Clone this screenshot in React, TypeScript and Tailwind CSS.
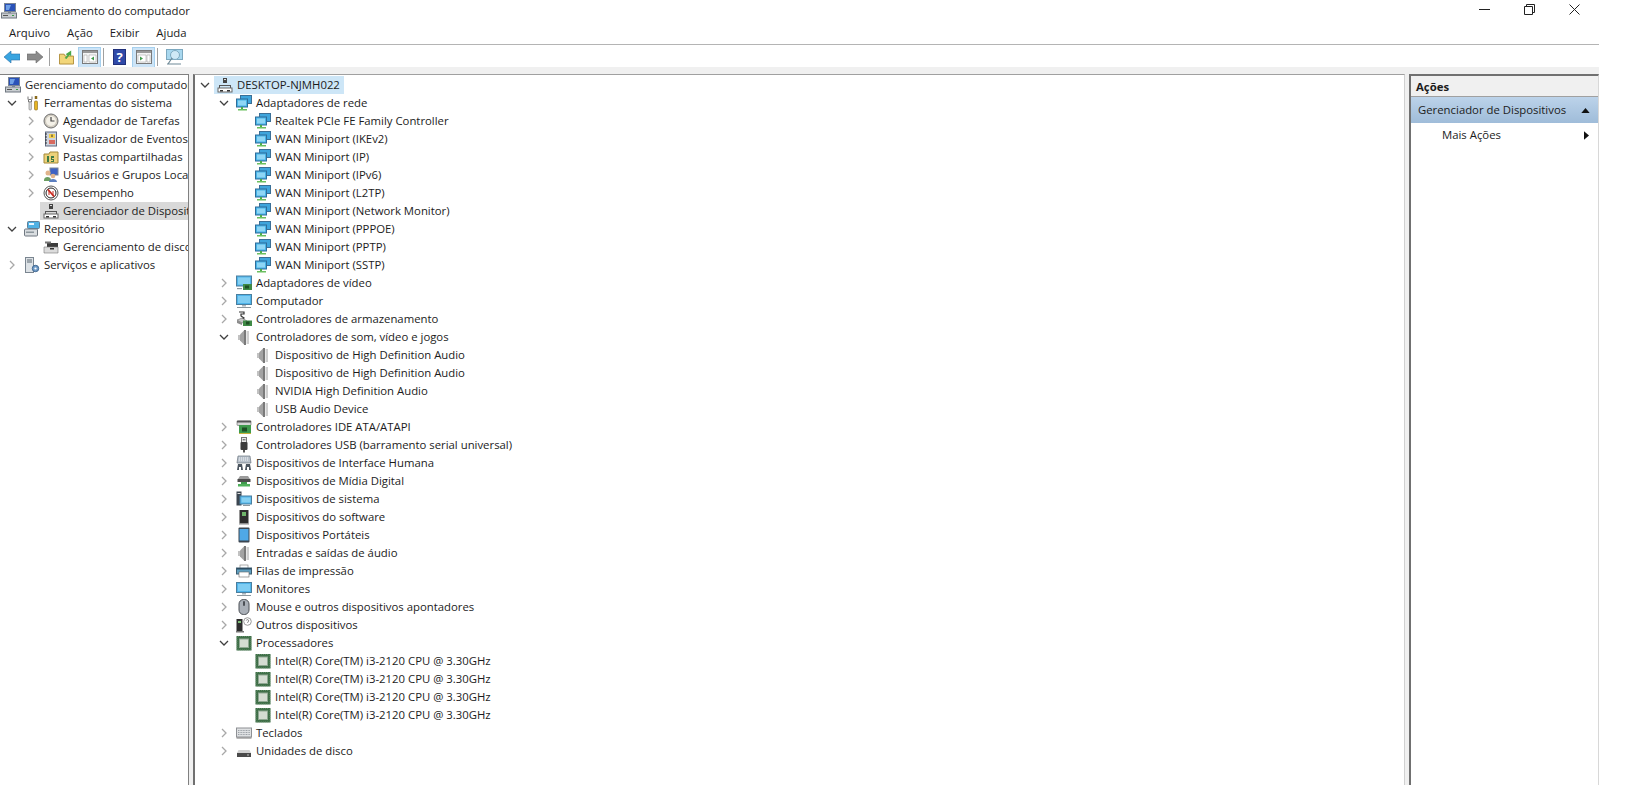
import React from 'react';

const Svg = ({ children, className = 'w-4 h-4' }: { children: React.ReactNode; className?: string }) => (
  <svg viewBox="0 0 16 16" className={`${className} shrink-0`}>
    {children}
  </svg>
);

const Net = () => (
  <Svg>
    <rect x="4.5" y="0.5" width="11" height="8" fill="#3fa5dc" stroke="#3b6f96" />
    <rect x="0.5" y="4" width="11" height="8" fill="#47b4e8" stroke="#2f6d99" />
    <rect x="2" y="5.5" width="8" height="5" fill="#8fd6f5" />
    <rect x="5" y="12" width="2" height="2" fill="#4fae4a" />
    <rect x="2" y="14" width="9" height="1.5" fill="#6bbf5f" />
  </Svg>
);
const Speaker = () => (
  <Svg>
    <path d="M2 6h3v5H2z" fill="#c2c2c2" />
    <path d="M4 5.5 8 1.500v14l-4-4z" fill="#a3a3a3" />
    <path d="M8 1h2v15H8z" fill="#7a7a7a" />
    <path d="M10.500 2h2.500v13h-2.500z" fill="#cfcfcf" />
  </Svg>
);
const Chip = () => (
  <Svg>
    <rect x="0.5" y="1" width="15" height="14.500" fill="#3f6f48" />
    <rect x="3.500" y="4" width="9" height="8.500" fill="#d4dcd2" stroke="#8fa892" />
    <path d="M1 2v13M15 2v13M2 1.500h12M2 15h12" stroke="#77a07c" strokeWidth="0.6" strokeDasharray="1 1" />
  </Svg>
);
const Screen = () => (
  <Svg>
    <rect x="0.5" y="1.5" width="15" height="10" fill="#4fb4ea" stroke="#4a7f9f" />
    <rect x="2" y="3" width="12" height="7" fill="#7fcdf3" />
    <rect x="6" y="12" width="4" height="1.5" fill="#aab4bb" />
    <rect x="1" y="14" width="14" height="1" fill="#8d979d" />
  </Svg>
);
const DeviceMgr = () => (
  <Svg>
    <rect x="6" y="1" width="4" height="5" fill="#444" />
    <rect x="7" y="2" width="2" height="1" fill="#ddd" />
    <path d="M2 8h12v7h-1V9H3v6H2z" fill="#555" />
    <rect x="1" y="11" width="14" height="4" fill="#fff" stroke="#666" />
    <rect x="3" y="13" width="3" height="1.5" fill="#333" />
    <rect x="10" y="13" width="3" height="1.5" fill="#333" />
  </Svg>
);
const CompMgmt = () => (
  <Svg>
    <rect x="3.5" y="0.5" width="11" height="8" fill="#2a52b8" stroke="#7a8596" />
    <path d="M5 2h5l-2 5H5z" fill="#6fa0e6" />
    <rect x="0.5" y="10" width="15" height="5" fill="#c8ccd0" stroke="#6f7780" />
    <rect x="7" y="9" width="3" height="1" fill="#7a8596" />
    <rect x="2" y="12" width="5" height="1" fill="#555" />
    <rect x="11" y="12" width="2" height="1" fill="#3a9a48" />
  </Svg>
);
const Tools = () => (
  <Svg>
    <path d="M4 1.5v3M8 1.5v3M4.5 4.5h3V7h-3z" stroke="#777" fill="none" />
    <rect x="5" y="7" width="2.4" height="8" rx="1" fill="#d9dadb" stroke="#777" strokeWidth="0.6" />
    <path d="M12 1v3" stroke="#8a6a1c" strokeWidth="2.5" />
    <rect x="10.5" y="6" width="3" height="9" rx="1" fill="#e6b422" stroke="#8a6a1c" strokeWidth="0.6" />
  </Svg>
);
const Clock = () => (
  <Svg>
    <circle cx="8" cy="8" r="7" fill="#cfcabf" stroke="#6f6f6f" />
    <circle cx="8" cy="8" r="5" fill="#f4f1e8" />
    <path d="M8 4v4h3.5" stroke="#444" fill="none" strokeWidth="1.2" />
  </Svg>
);
const EventLog = () => (
  <Svg>
    <rect x="2.5" y="1" width="11" height="14" fill="#cdd3dd" stroke="#5f6a80" />
    <path d="M2 3h2M2 6h2M2 9h2M2 12h2" stroke="#333" />
    <path d="M6 3h6v4H6z" fill="#f2cf4f" />
    <path d="M6 9h6v4H6z" fill="#d86a60" />
    <path d="M9 3.5v2.5" stroke="#333" />
  </Svg>
);
const SharedFolder = () => (
  <Svg>
    <path d="M1 5h5l1-2h8v11H1z" fill="#ecd27a" stroke="#a58a3a" />
    <path d="M4 7h2v6H4zM8 7h3v2H9v1h2v3H8v-1h2v-1H8z" fill="#3d7b46" />
  </Svg>
);
const Users = () => (
  <Svg>
    <rect x="7" y="1" width="8" height="7" fill="#3d62c4" stroke="#7a8596" />
    <circle cx="5" cy="6" r="2.5" fill="#e0b48c" />
    <path d="M1 13c0-4 7-4 7 0v1H1z" fill="#6b9e62" />
    <circle cx="10" cy="9" r="2.3" fill="#e0b48c" />
    <path d="M6 15c0-4 8-4 8 0z" fill="#5c7fc0" />
  </Svg>
);
const Perf = () => (
  <Svg>
    <circle cx="8" cy="8" r="7" fill="#fff" stroke="#555" />
    <circle cx="8" cy="8" r="5" fill="none" stroke="#222" strokeWidth="1" />
    <path d="M5 4.5 11 11.5" stroke="#c8281e" strokeWidth="1.8" />
    <path d="M6 10V6l4 4V6" stroke="#c8281e" fill="none" strokeWidth="1" />
  </Svg>
);
const Repo = () => (
  <Svg>
    <rect x="3.5" y="0.5" width="12" height="7" rx="1" fill="#4fb1e4" stroke="#5f7f96" />
    <rect x="5" y="2" width="5" height="2" fill="#e8f5ff" />
    <rect x="0.5" y="8" width="13" height="7" rx="1" fill="#d9dde0" stroke="#6f7780" />
    <rect x="2" y="10.5" width="8" height="1.5" fill="#8d979d" />
  </Svg>
);
const DiskMgmt = () => (
  <Svg>
    <path d="M4 4h11v4H4z" fill="#3c3c3c" />
    <path d="M1 8h14v6H1z" fill="#dcdcdc" stroke="#777" strokeWidth="0.6" />
    <rect x="7" y="9" width="4" height="1.5" fill="#333" />
    <rect x="2" y="2.5" width="6" height="2" fill="#777" />
  </Svg>
);
const Services = () => (
  <Svg>
    <rect x="1.5" y="0.5" width="8" height="15" fill="#dde2e6" stroke="#7a8590" />
    <path d="M3 3h5M3 5h5" stroke="#5b6670" />
    <circle cx="11.5" cy="11.5" r="3.2" fill="#6f9bc8" stroke="#3f6690" />
    <circle cx="11.5" cy="11.5" r="1.1" fill="#fff" />
  </Svg>
);
const VideoCard = () => (
  <Svg>
    <rect x="0.5" y="1" width="15" height="10" fill="#4fb4ea" stroke="#4a7f9f" />
    <rect x="2" y="2.5" width="12" height="7" fill="#86d0f2" />
    <rect x="7" y="9" width="9" height="6" fill="#3f8a46" />
    <rect x="9" y="10.5" width="4" height="3" fill="#1e4f24" />
    <rect x="1" y="13" width="5" height="1.2" fill="#8d979d" />
  </Svg>
);
const Storage = () => (
  <Svg>
    <path d="M3 1h5v2H5v2l3 2-3 2" stroke="#333" fill="none" strokeWidth="1.2" />
    <path d="M1 9l5-2 5 3-5 2z" fill="#c6c6c6" stroke="#555" strokeWidth="0.5" />
    <rect x="7" y="9.5" width="9" height="5.5" fill="#3f8a46" />
    <rect x="10" y="10.5" width="3.5" height="3" fill="#1e4f24" />
    <path d="M1 9v3l5 2v-2z" fill="#8c8c8c" />
  </Svg>
);
const Ide = () => (
  <Svg>
    <rect x="1" y="1.5" width="14" height="5" rx="1" fill="#d5d5d5" stroke="#666" strokeWidth="0.6" />
    <rect x="1" y="2" width="14" height="1.5" fill="#555" />
    <rect x="3" y="6" width="12" height="9" fill="#3f9a4c" />
    <rect x="6" y="8.5" width="5" height="4" fill="#1e4f24" />
    <rect x="3" y="14" width="12" height="1" fill="#c8b13c" />
  </Svg>
);
const Usb = () => (
  <Svg>
    <rect x="5.5" y="0.5" width="5" height="5" fill="#e8e8e8" stroke="#777" />
    <rect x="6.8" y="2" width="0.9" height="1.4" fill="#444" />
    <rect x="8.4" y="2" width="0.9" height="1.4" fill="#444" />
    <rect x="4.5" y="5" width="7" height="8" rx="1" fill="#3c3c3c" />
    <rect x="7" y="13" width="2" height="2.5" fill="#555" />
  </Svg>
);
const Hid = () => (
  <Svg>
    <path d="M2 1h12l1 7H1z" fill="#b9c2cc" stroke="#6c7680" strokeWidth="0.7" />
    <path d="M3 3h10M3 5h10" stroke="#f2f4f6" strokeDasharray="1 1" />
    <path d="M1 15l1-6h4l1 6H5V12H3v3zM9 15l1-6h4l1 6h-2v-3h-2v3z" fill="#4c5660" />
  </Svg>
);
const Media = () => (
  <Svg>
    <path d="M2 6l2-3h8l2 3z" fill="#9c9c9c" />
    <rect x="1.5" y="6" width="13" height="3" fill="#4c4c4c" />
    <rect x="5" y="9" width="6" height="2" fill="#3f9a4c" />
    <rect x="2" y="11" width="12" height="2.5" fill="#4fb05a" />
  </Svg>
);
const SystemIcon = () => (
  <Svg>
    <rect x="0.5" y="0.5" width="5" height="14" fill="#3c4650" />
    <rect x="1.5" y="2" width="3" height="1" fill="#ddd" />
    <rect x="4" y="5" width="11.5" height="8" fill="#4fb4ea" stroke="#4a7f9f" />
    <rect x="5.5" y="6.5" width="9" height="5" fill="#86d0f2" />
    <rect x="7" y="14" width="7" height="1" fill="#8d979d" />
  </Svg>
);
const Software = () => (
  <Svg>
    <rect x="3.5" y="1" width="9" height="13.5" fill="#2d2d2d" />
    <rect x="6" y="3" width="4" height="4" fill="#6fb56a" />
    <rect x="3" y="14.5" width="10" height="1" fill="#888" />
  </Svg>
);
const Portable = () => (
  <Svg>
    <rect x="2.5" y="0.5" width="11" height="15" rx="1" fill="#3c4650" />
    <rect x="3.5" y="2" width="9" height="11.5" fill="#4fa8e6" />
  </Svg>
);
const Printer = () => (
  <Svg>
    <rect x="4" y="2" width="8" height="4" fill="#fff" stroke="#777" strokeWidth="0.6" />
    <rect x="0.5" y="5" width="15" height="6" fill="#5e9fc0" stroke="#3c5c70" />
    <rect x="1" y="5" width="14" height="1.5" fill="#2e4c60" />
    <rect x="3" y="9" width="10" height="5" fill="#fff" stroke="#666" strokeWidth="0.6" />
  </Svg>
);
const Mouse = () => (
  <Svg>
    <rect x="3" y="0.5" width="10" height="15" rx="4.5" fill="#aab0b8" stroke="#4c5056" />
    <rect x="7" y="2" width="2" height="5" rx="1" fill="#4c5056" />
  </Svg>
);
const Other = () => (
  <Svg>
    <rect x="0.5" y="2" width="6" height="12" fill="#2d2d2d" />
    <rect x="2" y="4" width="3" height="2" fill="#7fbf78" />
    <rect x="0" y="14" width="8" height="1.5" fill="#777" />
    <circle cx="11.5" cy="4.5" r="3.8" fill="#fff" stroke="#9a9a9a" />
    <path d="M10.3 3.5a1.2 1.2 0 1 1 1.4 1.5v.8" stroke="#666" fill="none" strokeWidth="0.8" />
  </Svg>
);
const Keyboard = () => (
  <Svg>
    <rect x="0.5" y="3" width="15" height="9" fill="#dfe1e3" stroke="#8d9094" />
    <path d="M2 5.5h12M2 7.5h12M2 9.5h12" stroke="#9ba0a6" strokeDasharray="1 0.6" />
    <rect x="0.5" y="12.5" width="15" height="1" fill="#777" />
  </Svg>
);
const Disk = () => (
  <Svg>
    <path d="M2.5 7h11l1.500 3H1z" fill="#d2d2d2" />
    <rect x="1" y="10" width="14" height="4" fill="#4a4a4a" />
    <rect x="11" y="11.5" width="2" height="1" fill="#bfbfbf" />
  </Svg>
);

const Chevron = ({ open }: { open?: boolean }) => (
  <svg viewBox="0 0 10 10" className="w-[10px] h-[10px] shrink-0">
    {open ? (
      <path d="M1 3l4 4 4-4" fill="none" stroke="#404040" strokeWidth="1.3" />
    ) : (
      <path d="M3 1l4 4-4 4" fill="none" stroke="#a8a8a8" strokeWidth="1.3" />
    )}
  </svg>
);

interface RowProps {
  indent: string;
  icon: React.ReactNode;
  label: string;
  state?: 'open' | 'closed' | 'leaf' | 'none';
  rowClass?: string;
}

const TreeRow = ({ indent, icon, label, state = 'leaf', rowClass = '' }: RowProps) => (
  <div className={`flex items-center h-[18px] whitespace-nowrap ${indent} ${rowClass}`}>
    {state !== 'none' && (
      <span className="w-[17px] shrink-0 flex">
        {state !== 'leaf' && <Chevron open={state === 'open'} />}
      </span>
    )}
    {icon}
    <span className="ml-1">{label}</span>
  </div>
);

const d1 = 'pl-[24px]';
const d2 = 'pl-[43px]';

const rightRows: { label: string; icon: React.ReactNode; state: 'open' | 'closed' | 'leaf'; indent: string }[] = [
  { label: 'Adaptadores de rede', icon: <Net />, state: 'open', indent: d1 },
  { label: 'Realtek PCIe FE Family Controller', icon: <Net />, state: 'leaf', indent: d2 },
  { label: 'WAN Miniport (IKEv2)', icon: <Net />, state: 'leaf', indent: d2 },
  { label: 'WAN Miniport (IP)', icon: <Net />, state: 'leaf', indent: d2 },
  { label: 'WAN Miniport (IPv6)', icon: <Net />, state: 'leaf', indent: d2 },
  { label: 'WAN Miniport (L2TP)', icon: <Net />, state: 'leaf', indent: d2 },
  { label: 'WAN Miniport (Network Monitor)', icon: <Net />, state: 'leaf', indent: d2 },
  { label: 'WAN Miniport (PPPOE)', icon: <Net />, state: 'leaf', indent: d2 },
  { label: 'WAN Miniport (PPTP)', icon: <Net />, state: 'leaf', indent: d2 },
  { label: 'WAN Miniport (SSTP)', icon: <Net />, state: 'leaf', indent: d2 },
  { label: 'Adaptadores de vídeo', icon: <VideoCard />, state: 'closed', indent: d1 },
  { label: 'Computador', icon: <Screen />, state: 'closed', indent: d1 },
  { label: 'Controladores de armazenamento', icon: <Storage />, state: 'closed', indent: d1 },
  { label: 'Controladores de som, vídeo e jogos', icon: <Speaker />, state: 'open', indent: d1 },
  { label: 'Dispositivo de High Definition Audio', icon: <Speaker />, state: 'leaf', indent: d2 },
  { label: 'Dispositivo de High Definition Audio', icon: <Speaker />, state: 'leaf', indent: d2 },
  { label: 'NVIDIA High Definition Audio', icon: <Speaker />, state: 'leaf', indent: d2 },
  { label: 'USB Audio Device', icon: <Speaker />, state: 'leaf', indent: d2 },
  { label: 'Controladores IDE ATA/ATAPI', icon: <Ide />, state: 'closed', indent: d1 },
  { label: 'Controladores USB (barramento serial universal)', icon: <Usb />, state: 'closed', indent: d1 },
  { label: 'Dispositivos de Interface Humana', icon: <Hid />, state: 'closed', indent: d1 },
  { label: 'Dispositivos de Mídia Digital', icon: <Media />, state: 'closed', indent: d1 },
  { label: 'Dispositivos de sistema', icon: <SystemIcon />, state: 'closed', indent: d1 },
  { label: 'Dispositivos do software', icon: <Software />, state: 'closed', indent: d1 },
  { label: 'Dispositivos Portáteis', icon: <Portable />, state: 'closed', indent: d1 },
  { label: 'Entradas e saídas de áudio', icon: <Speaker />, state: 'closed', indent: d1 },
  { label: 'Filas de impressão', icon: <Printer />, state: 'closed', indent: d1 },
  { label: 'Monitores', icon: <Screen />, state: 'closed', indent: d1 },
  { label: 'Mouse e outros dispositivos apontadores', icon: <Mouse />, state: 'closed', indent: d1 },
  { label: 'Outros dispositivos', icon: <Other />, state: 'closed', indent: d1 },
  { label: 'Processadores', icon: <Chip />, state: 'open', indent: d1 },
  { label: 'Intel(R) Core(TM) i3-2120 CPU @ 3.30GHz', icon: <Chip />, state: 'leaf', indent: d2 },
  { label: 'Intel(R) Core(TM) i3-2120 CPU @ 3.30GHz', icon: <Chip />, state: 'leaf', indent: d2 },
  { label: 'Intel(R) Core(TM) i3-2120 CPU @ 3.30GHz', icon: <Chip />, state: 'leaf', indent: d2 },
  { label: 'Intel(R) Core(TM) i3-2120 CPU @ 3.30GHz', icon: <Chip />, state: 'leaf', indent: d2 },
  { label: 'Teclados', icon: <Keyboard />, state: 'closed', indent: d1 },
  { label: 'Unidades de disco', icon: <Disk />, state: 'closed', indent: d1 },
];

const Separator = ({ className }: { className: string }) => <div className={`w-px h-[18px] bg-[#a0a0a0] ${className}`} />;

const Toolbar = () => (
  <div className="flex items-center h-[22px] pl-1 pt-[2px]">
    <svg viewBox="0 0 16 14" className="w-4 h-[14px]">
      <path d="M0 7l7-6v3h9v6H7v3z" fill="#38a4e0" stroke="#2a6fa8" strokeWidth="0.6" />
    </svg>
    <svg viewBox="0 0 16 14" className="w-4 h-[14px] ml-[7px]">
      <path d="M16 7L9 1v3H0v6h9v3z" fill="#8a8a8a" stroke="#6a6a6a" strokeWidth="0.6" />
    </svg>
    <Separator className="ml-[6px]" />
    <svg viewBox="0 0 16 16" className="w-[15px] h-4 ml-[9px]">
      <path d="M0.500 5h5l1 2h9v8.500h-15z" fill="#f2d67a" stroke="#b08e3a" />
      <path d="M6 9l3-3-2-1 6-4v6l-2-1-3 4z" fill="#4aa84a" />
    </svg>
    <div className="w-[23px] h-[21px] ml-1 flex items-center justify-center bg-[#cce4f7] border border-[#a6d0ee]">
      <svg viewBox="0 0 16 14" className="w-4 h-[14px]">
        <rect x="0.500" y="0.500" width="15" height="13" fill="#f4f4f4" stroke="#7a7a7a" />
        <rect x="1" y="1" width="14" height="2" fill="#9a9a9a" />
        <path d="M2 5h3v7H2zM7 5h7v7H7z" fill="#fff" stroke="#999" strokeWidth="0.5" />
        <path d="M12 6.500v4l-3-2z" fill="#3f9a4c" />
      </svg>
    </div>
    <Separator className="ml-[2px]" />
    <div className="w-[13px] h-4 ml-[9px] bg-[#2f49a8] border border-[#20307a] flex items-center justify-center text-white text-[13px] font-bold leading-none">?</div>
    <div className="w-[23px] h-[21px] ml-[6px] flex items-center justify-center bg-[#cce4f7] border border-[#a6d0ee]">
      <svg viewBox="0 0 16 14" className="w-4 h-[14px]">
        <rect x="0.500" y="0.500" width="15" height="13" fill="#f4f4f4" stroke="#7a7a7a" />
        <rect x="1" y="1" width="14" height="2" fill="#9a9a9a" />
        <path d="M2 5h8v7H2zM11 5h3v7h-3z" fill="#fff" stroke="#999" strokeWidth="0.5" />
        <path d="M4 6.500v4l3-2z" fill="#3f9a4c" />
      </svg>
    </div>
    <Separator className="ml-[2px]" />
    <svg viewBox="0 0 17 16" className="w-[17px] h-4 ml-2">
      <rect x="0.500" y="0.500" width="16" height="10" fill="#a9d8ef" stroke="#7da9c0" />
      <circle cx="9" cy="6" r="4.500" fill="#cfe9f6" stroke="#7da9c0" />
      <path d="M6 9l-4 6M1 15h14" stroke="#6f8a98" strokeWidth="1.2" />
    </svg>
  </div>
);

export default function App() {
  return (
    <div className="w-[1626px] h-[808px] bg-white overflow-hidden text-[11.35px] text-[#1c1c1c] font-['Open_Sans','Noto_Sans',sans-serif]">
      <div className="w-[1599px] h-[785px] flex flex-col">
        <div className="flex items-center h-[22px] shrink-0 pl-[1px]">
          <CompMgmt />
          <span className="ml-[6px]">Gerenciamento do computador</span>
          <div className="ml-auto flex items-center mr-[19px] mb-[3px] gap-[34px]">
            <div className="w-[11px] h-px bg-[#222]" />
            <svg viewBox="0 0 11 11" className="w-[11px] h-[11px]">
              <path d="M0.500 2.500h8v8h-8zM2.500 2.500v-2h8v8h-2" fill="none" stroke="#222" />
            </svg>
            <svg viewBox="0 0 11 11" className="w-[11px] h-[11px]">
              <path d="M0.500 0.500l10 10M10.500 0.500l-10 10" stroke="#222" />
            </svg>
          </div>
        </div>
        <div className="flex items-center h-[22px] shrink-0 pl-[9px] gap-[17px] border-b border-[#b4b4b4] box-content">
          <span>Arquivo</span>
          <span>Ação</span>
          <span>Exibir</span>
          <span>Ajuda</span>
        </div>
        <Toolbar />
        <div className="h-[7px] shrink-0 bg-[#f0f0f0]" />
        <div className="flex flex-1 min-h-0 bg-[#f0f0f0]">
          <div className="w-[189px] shrink-0 bg-white border-t border-r border-[#808080] overflow-hidden pt-[1px]">
            <TreeRow indent="pl-[5px]" state="none" icon={<CompMgmt />} label="Gerenciamento do computador" />
            <TreeRow indent="pl-[7px]" state="open" icon={<Tools />} label="Ferramentas do sistema" />
            <TreeRow indent="pl-[26px]" state="closed" icon={<Clock />} label="Agendador de Tarefas" />
            <TreeRow indent="pl-[26px]" state="closed" icon={<EventLog />} label="Visualizador de Eventos" />
            <TreeRow indent="pl-[26px]" state="closed" icon={<SharedFolder />} label="Pastas compartilhadas" />
            <TreeRow indent="pl-[26px]" state="closed" icon={<Users />} label="Usuários e Grupos Locais" />
            <TreeRow indent="pl-[26px]" state="closed" icon={<Perf />} label="Desempenho" />
            <div className="pl-[40px]">
              <TreeRow indent="pl-[3px]" state="none" rowClass="bg-[#d9d9d9]" icon={<DeviceMgr />} label="Gerenciador de Dispositivos" />
            </div>
            <TreeRow indent="pl-[7px]" state="open" icon={<Repo />} label="Repositório" />
            <TreeRow indent="pl-[26px]" state="leaf" icon={<DiskMgmt />} label="Gerenciamento de discos" />
            <TreeRow indent="pl-[7px]" state="closed" icon={<Services />} label="Serviços e aplicativos" />
          </div>
          <div className="w-[4px] shrink-0" />
          <div className="w-[1212px] shrink-0 bg-white border-t border-l-2 border-r border-t-[#a0a0a0] border-l-[#707070] border-r-[#d0d0d0] overflow-hidden pt-[1px]">
            <div className="flex items-center h-[18px]">
              <div className="pl-[5px] w-[22px] shrink-0">
                <Chevron open />
              </div>
              <div className="flex items-center h-[18px] bg-[#cde6f7] pr-1 -ml-[3px] pl-[3px]">
                <DeviceMgr />
                <span className="ml-1">DESKTOP-NJMH022</span>
              </div>
            </div>
            {rightRows.map((row, index) => (
              <TreeRow key={index} indent={row.indent} state={row.state} icon={row.icon} label={row.label} />
            ))}
          </div>
          <div className="w-[4px] shrink-0" />
          <div className="flex-1 min-w-0 bg-white border-t-2 border-l-2 border-r border-t-[#707070] border-l-[#707070] border-r-[#d8d8d8]">
            <div className="h-[21px] flex items-center pl-[5px] pt-[1px] bg-[#f0f0f0] border-b border-[#a0a0a0] font-bold">Ações</div>
            <div className="h-[26px] flex items-center pl-[7px] pr-[8px] whitespace-nowrap bg-gradient-to-b from-[#bcd3ea] to-[#9fbcd9]">
              <span>Gerenciador de Dispositivos</span>
              <svg viewBox="0 0 10 6" className="ml-auto w-[9px] h-[5px]">
                <path d="M0 6l5-6 5 6z" fill="#111" />
              </svg>
            </div>
            <div className="h-[24px] flex items-center pl-[31px] pr-[9px]">
              <span>Mais Ações</span>
              <svg viewBox="0 0 6 10" className="ml-auto w-[5px] h-[9px]">
                <path d="M0 0l6 5-6 5z" fill="#111" />
              </svg>
            </div>
          </div>
        </div>
      </div>
    </div>
  );
}
